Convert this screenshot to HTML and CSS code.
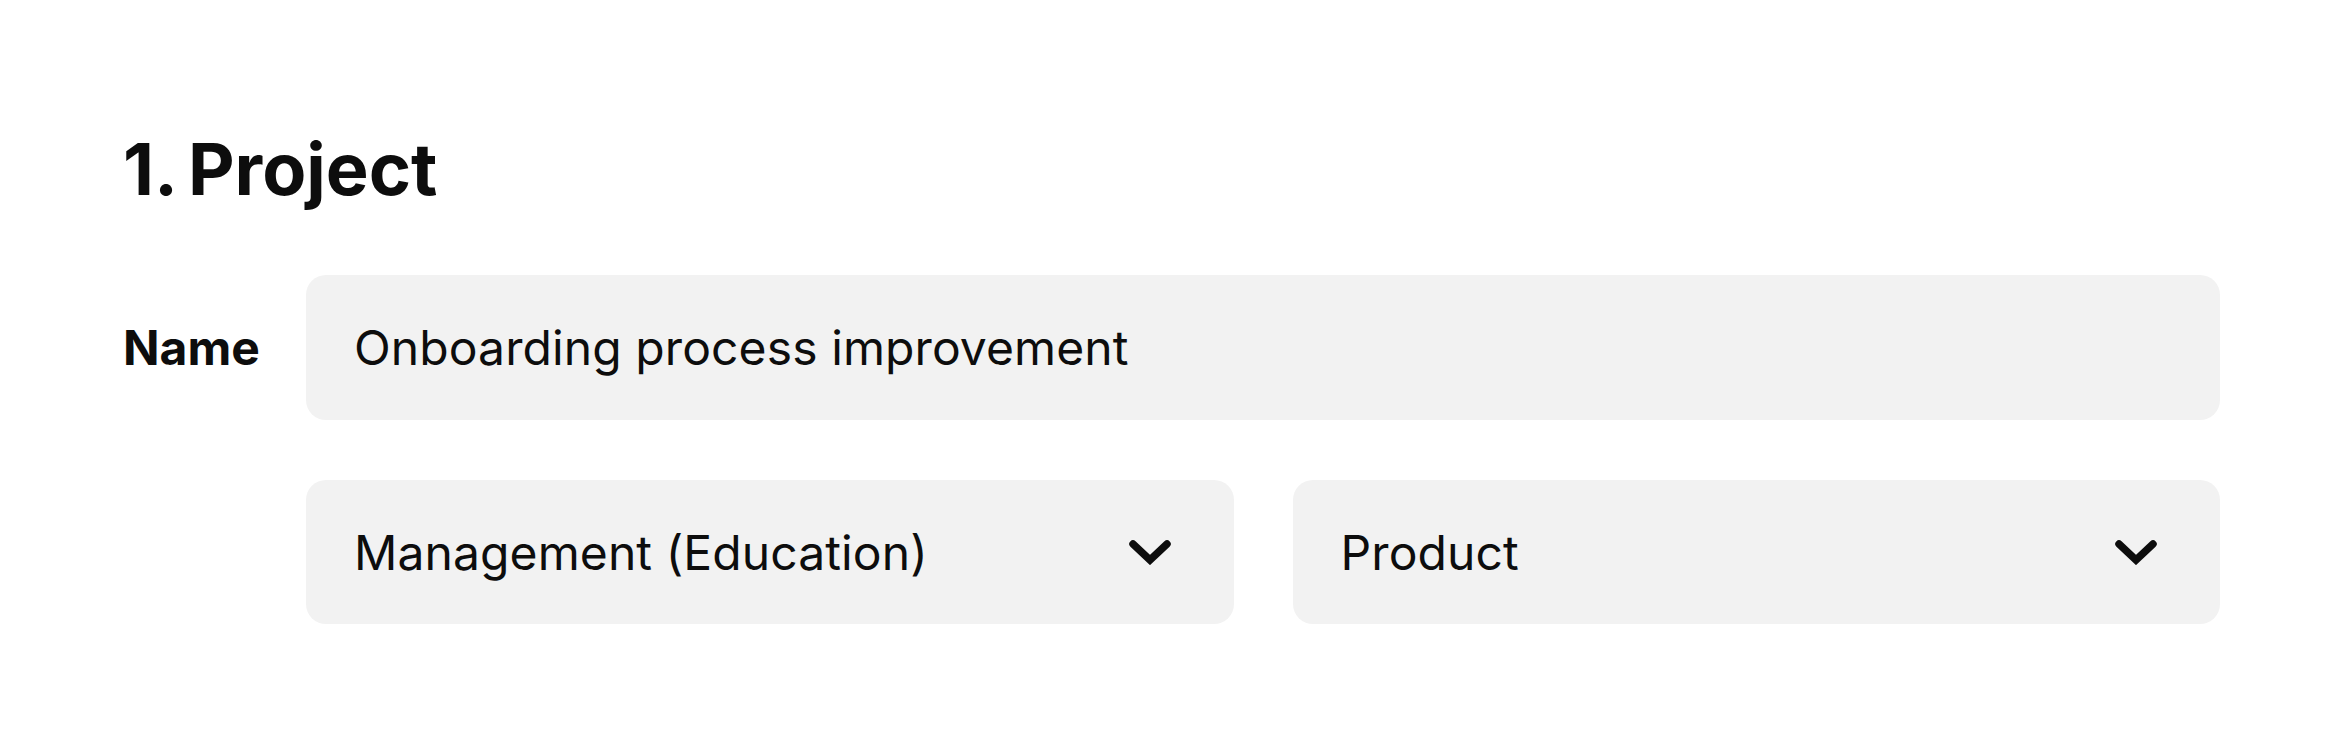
FILE: index.html
```html
<!DOCTYPE html>
<html lang="en">
<head>
<meta charset="utf-8">
<title>Project</title>
<link rel="stylesheet" href="styles.css">
</head>
<body>
<main class="page">
  <h1 class="title">1. Project</h1>
  <div class="form">
    <label class="label" for="name">Name</label>
    <div class="field" id="name">Onboarding process improvement</div>
    <div class="spacer"></div>
    <div class="selects">
      <div class="select">
        <span>Management (Education)</span>
        <svg class="chev" viewBox="0 0 44 26" width="44" height="26"><path d="M5 5 L22 21 L39 5" fill="none" stroke="#0d0d0d" stroke-width="7.5" stroke-linecap="round" stroke-linejoin="miter"/></svg>
      </div>
      <div class="select">
        <span>Product</span>
        <svg class="chev" viewBox="0 0 44 26" width="44" height="26"><path d="M5 5 L22 21 L39 5" fill="none" stroke="#0d0d0d" stroke-width="7.5" stroke-linecap="round" stroke-linejoin="miter"/></svg>
      </div>
    </div>
  </div>
</main>
</body>
</html>
```
FILE: styles.css
```css
* { box-sizing: border-box; }
html, body { margin: 0; background: #ffffff; }
body {
  font-family: Inter, "Noto Sans", "Liberation Sans", sans-serif;
  color: #0d0d0d;
}
.page {
  padding: 125px 120px 0 123px;
  width: 2340px;
  height: 744px;
}
.title {
  margin: 0;
  font-size: 72px;
  line-height: 88px;
  font-weight: 700;
  letter-spacing: 0;
  word-spacing: -5px;
}
.form {
  margin-top: 62px;
  display: grid;
  grid-template-columns: 183px 1fr;
  row-gap: 60px;
  width: 2097px;
}
.label {
  align-self: center;
  font-size: 48px;
  font-weight: 700;
}
.field {
  height: 145px;
  background: #f2f2f2;
  border-radius: 20px;
  display: flex;
  align-items: center;
  padding-left: 48px;
  font-size: 48px;
  letter-spacing: 0.1px;
}
.selects {
  display: grid;
  grid-template-columns: 1fr 1fr;
  column-gap: 59px;
}
.select {
  height: 144px;
  background: #f2f2f2;
  border-radius: 20px;
  display: flex;
  align-items: center;
  justify-content: space-between;
  padding: 0 62px 0 48px;
  font-size: 48px;
  letter-spacing: 0.1px;
}
.chev { display: block; }
```
